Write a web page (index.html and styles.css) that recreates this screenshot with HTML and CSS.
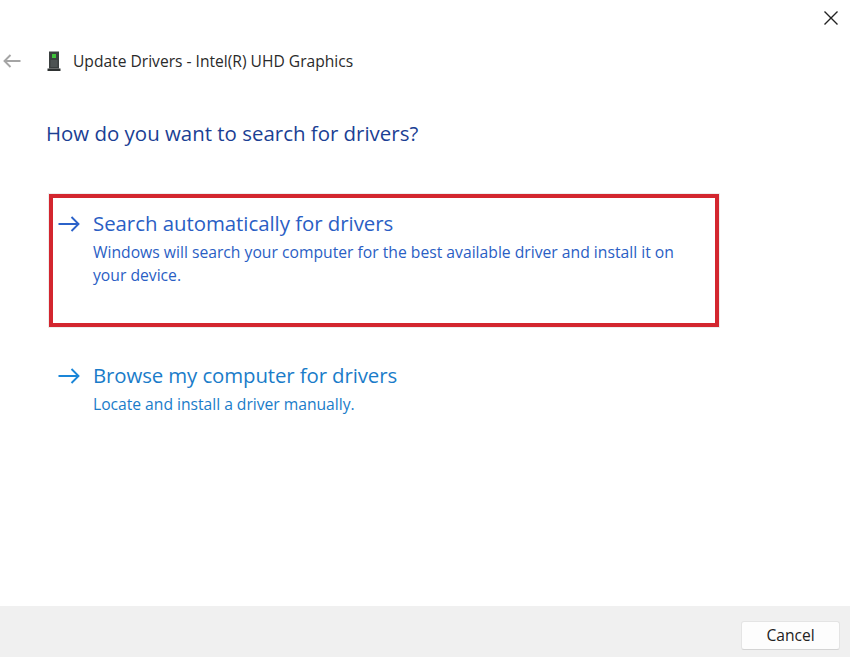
FILE: index.html
```html
<!DOCTYPE html>
<html lang="en">
<head>
<meta charset="utf-8">
<title>Update Drivers</title>
<link rel="stylesheet" href="styles.css">
</head>
<body>
<div class="dialog">
  <div class="titlebar">
    <svg class="close" width="16" height="16" viewBox="0 0 16 16"><path d="M1.5 1.5 14.5 14.5M14.5 1.5 1.5 14.5" fill="none" stroke="#222" stroke-width="1.4"/></svg>
  </div>
  <div class="header">
    <svg class="back" width="18" height="14" viewBox="0 0 18 14"><path d="M17.5 7H1.5M7.5 1 1.5 7l6 6" fill="none" stroke="#a5a5a5" stroke-width="1.9"/></svg>
    <svg class="device" width="14" height="20" viewBox="0 0 14 20">
      <path d="M2 0.5h10v17H2z" fill="#3a3f3f"/>
      <path d="M0.5 17.5h13V20H.5z" fill="#2e3232"/>
      <rect x="5" y="3" width="4" height="4" fill="#3fc23a"/>
      <rect x="3.5" y="9" width="7" height="7" fill="#4d5353"/>
    </svg>
    <span class="header-title">Update Drivers - Intel(R) UHD Graphics</span>
  </div>
  <h1 class="question">How do you want to search for drivers?</h1>
  <div class="option option-selected">
    <svg class="arrow" width="22" height="16" viewBox="0 0 22 16"><path d="M0.5 8H20.5M13.5 1 20.5 8l-7 7" fill="none" stroke="#2b62c9" stroke-width="1.9"/></svg>
    <div class="option-text">
      <div class="option-title">Search automatically for drivers</div>
      <div class="option-desc">Windows will search your computer for the best available driver and install it on<br>your device.</div>
    </div>
  </div>
  <div class="option option-plain">
    <svg class="arrow" width="22" height="16" viewBox="0 0 22 16"><path d="M0.5 8H20.5M13.5 1 20.5 8l-7 7" fill="none" stroke="#1a86d8" stroke-width="1.9"/></svg>
    <div class="option-text">
      <div class="option-title plain-title">Browse my computer for drivers</div>
      <div class="option-desc plain-desc">Locate and install a driver manually.</div>
    </div>
  </div>
  <div class="footer">
    <div class="cancel">Cancel</div>
  </div>
</div>
</body>
</html>
```

FILE: styles.css
```css
* { box-sizing: border-box; }
html, body { margin: 0; padding: 0; background: #fff; }
.dialog {
  width: 850px;
  height: 657px;
  display: flex;
  flex-direction: column;
  font-family: "Open Sans", "Noto Sans", sans-serif;
  overflow: hidden;
}
.titlebar {
  display: flex;
  justify-content: flex-end;
  padding: 10px 11px 0 0;
  height: 47px;
}
.header {
  display: flex;
  align-items: center;
  height: 28px;
  padding-left: 3px;
}
.back { margin-right: 26px; }
.device { margin-right: 12px; }
.header-title {
  font-size: 15.6px;
  color: #2a2a2a;
}
.question {
  margin: 44px 0 0 46px;
  font-size: 20.45px;
  line-height: 28px;
  font-weight: 400;
  color: #1b3f94;
}
.option {
  display: flex;
  align-items: flex-start;
}
.option-selected {
  margin: 47px 0 0 49px;
  width: 670px;
  height: 133px;
  border: 4px solid #d3262f;
  padding: 11px 0 0 5px;
  box-shadow: 0 0 0 1px #eeeeee;
}
.option-plain {
  margin: 34px 0 0 58px;
}
.arrow { margin: 7px 13px 0 0; flex: none; }
.option-title {
  font-size: 20.4px;
  line-height: 28px;
  color: #2a5ec4;
  letter-spacing: -0.03px;
}
.option-desc {
  font-size: 15.7px;
  line-height: 23px;
  margin-top: 4px;
  color: #2a5ec4;
}
.plain-title, .plain-desc { color: #1a7cc9; }
.plain-title { letter-spacing: -0.1px; }
.plain-desc { margin-top: 4px; letter-spacing: -0.03px; }
.footer {
  margin-top: auto;
  height: 51px;
  background: #f0f0f0;
  display: flex;
  justify-content: flex-end;
  padding: 15px 10px 0 0;
}
.cancel {
  width: 99px;
  height: 29px;
  background: #fdfdfd;
  border: 1px solid #e4e4e4;
  border-bottom-color: #d4d4d4;
  border-radius: 3px;
  font-size: 15.6px;
  line-height: 27px;
  text-align: center;
  color: #222;
}
```
